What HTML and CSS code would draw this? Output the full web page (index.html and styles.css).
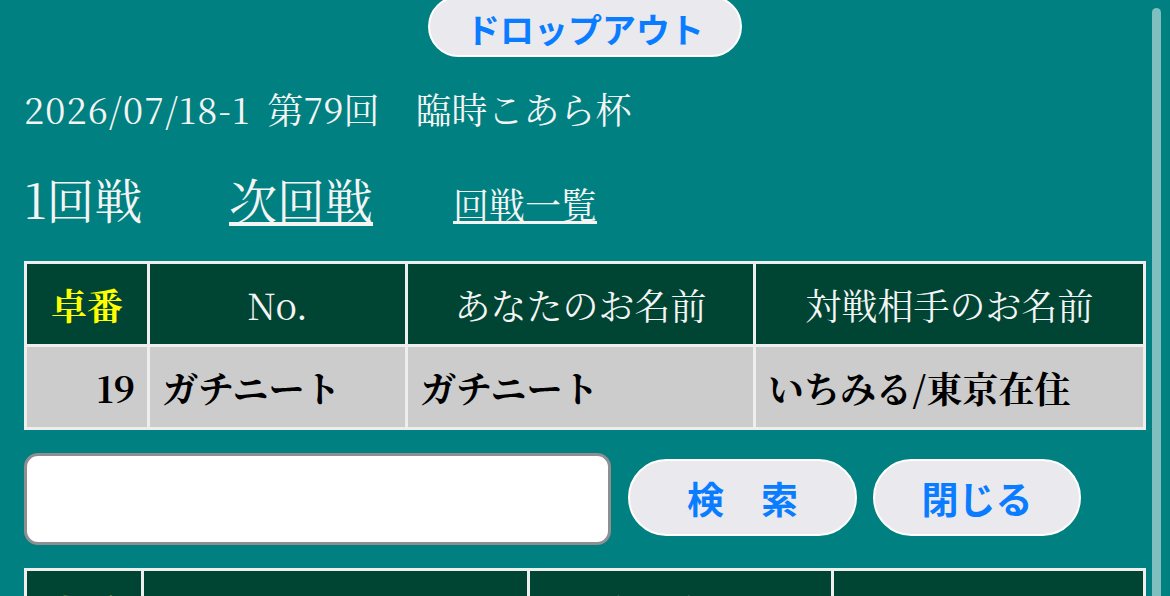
FILE: index.html
```html
<!DOCTYPE html>
<html lang="ja">
<head>
    <meta charset="UTF-8">
    <meta name="viewport" content="width=device-width, initial-scale=1.0">
    <title>臨時こあら杯 対戦表</title>
    <link rel="stylesheet" href="styles.css">
</head>
<body>
    <div class="scrollbar"></div>
    <div class="top">
        <button type="button" class="pill dropout">ドロップアウト</button>
    </div>
    <p class="event"><span class="date">2026/07/18-1</span> 第79回　臨時こあら杯</p>
    <div class="rounds">
        <span class="round-now">1回戦</span>
        <a href="#" class="round-next">次回戦</a>
        <a href="#" class="round-list">回戦一覧</a>
    </div>

    <table class="match">
        <colgroup>
            <col class="c1"><col class="c2"><col class="c3"><col class="c4">
        </colgroup>
        <tr>
            <th class="table-no">卓番</th>
            <th>No.</th>
            <th>あなたのお名前</th>
            <th>対戦相手のお名前</th>
        </tr>
        <tr>
            <td class="num">19</td>
            <td>ガチニート</td>
            <td>ガチニート</td>
            <td>いちみる/東京在住</td>
        </tr>
    </table>

    <form class="search" onsubmit="return false;">
        <input type="text" class="search-box">
        <button type="submit" class="pill search-btn">検　索</button>
        <button type="button" class="pill close-btn">閉じる</button>
    </form>

    <table class="match list">
        <colgroup>
            <col class="l1"><col class="l2"><col class="l3"><col class="l4">
        </colgroup>
        <tr>
            <th class="table-no">卓番</th>
            <th>お名前</th>
            <th>対戦相手</th>
            <th>勝敗</th>
        </tr>
    </table>
</body>
</html>
```

FILE: styles.css
```css
body {
    margin: 0;
    padding: 0 24px;
    background-color: #008080;
    color: #f4f4f4;
    font-family: "Noto Serif CJK JP", "Liberation Serif", "Noto Sans CJK JP", serif;
    overflow: hidden;
}
.scrollbar {
    position: fixed;
    top: 8px;
    right: 9px;
    width: 9px;
    height: 620px;
    border-radius: 5px;
    background-color: #80bfbf;
}
.top {
    display: flex;
    justify-content: center;
    margin-top: -4px;
}
.pill {
    font-family: "Noto Sans CJK JP", "Liberation Sans", sans-serif;
    font-weight: bold;
    font-size: 34px;
    color: #0a7cff;
    background-color: #e9e9ee;
    border: 2px solid #fff;
    border-radius: 40px;
    cursor: pointer;
    padding: 0;
}
.dropout {
    width: 314px;
    height: 61px;
    padding-top: 4px;
}
.event {
    font-size: 36px;
    margin: 26px 0 0;
    line-height: 52px;
    word-spacing: 8px;
}
.event .date {
    letter-spacing: 1.2px;
}
.rounds {
    display: flex;
    align-items: baseline;
    margin-top: 29px;
    height: 72px;
}
.rounds a {
    color: #f4f4f4;
}
.round-now {
    font-size: 48px;
    width: 205px;
}
.round-next {
    font-size: 48px;
    margin-right: 80px;
}
.round-list {
    font-size: 36px;
}
.match {
    width: 100%;
    border-collapse: collapse;
    border: 3px solid #eeeeee;
    margin-top: 25px;
    font-size: 36px;
}
.match th,
.match td {
    border: 3px solid #eeeeee;
    height: 80px;
    padding: 0 12px;
}
.match th {
    background-color: #004433;
    color: #f4f4f4;
    font-weight: normal;
}
.match th.table-no {
    color: #ffff00;
    font-weight: bold;
}
.match td {
    background-color: #cccccc;
    color: #000;
    font-weight: bold;
}
.match td.num {
    text-align: right;
}
.c1 { width: 123px; }
.c2 { width: 258px; }
.c3 { width: 348px; }
.l1 { width: 117px; }
.l2 { width: 386px; }
.l3 { width: 304px; }
.search {
    display: flex;
    align-items: center;
    margin: 23px 0 0;
}
.search-box {
    width: 587px;
    height: 92px;
    box-sizing: border-box;
    border: 3px solid #8e8e93;
    border-radius: 14px;
    background-color: #fff;
    margin: 0 17px 0 0;
}
.search-btn,
.close-btn {
    font-size: 37px;
    height: 77px;
    margin-top: -3px;
}
.search-btn {
    width: 229px;
    margin-right: 16px;
}
.close-btn {
    width: 208px;
}
.list {
    margin-top: 23px;
}
```
